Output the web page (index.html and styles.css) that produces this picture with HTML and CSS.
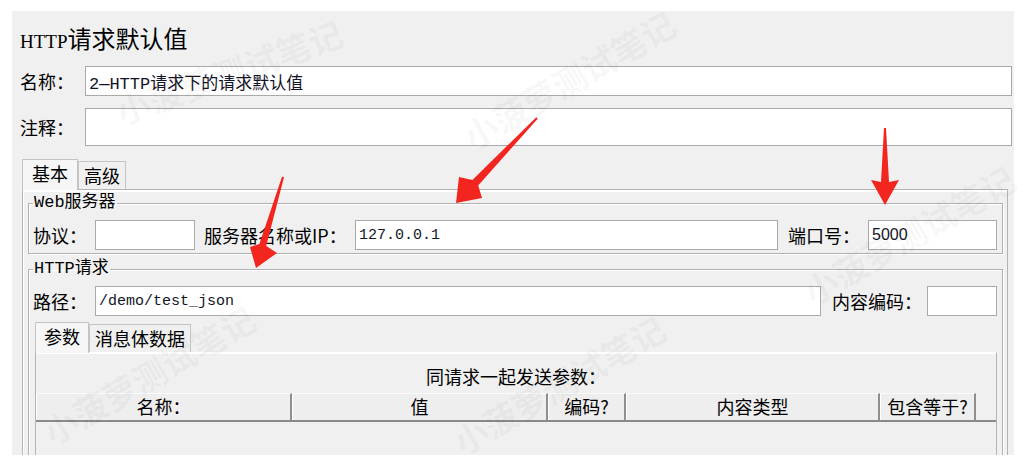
FILE: index.html
```html
<!DOCTYPE html>
<html lang="zh-CN">
<head>
    <meta charset="UTF-8">
    <meta name="viewport" content="width=device-width, initial-scale=1.0">
    <title>HTTP请求默认值</title>
    <link rel="stylesheet" href="styles.css">
</head>
<body>
    <div class="page">
        <div class="panel">
            <div class="title"><span class="latin">HTTP</span>请求默认值</div>

            <div class="row name-row">
                <label class="row-label">名称：</label>
                <input class="field name-field" type="text" value="2—HTTP请求下的请求默认值">
            </div>
            <div class="row comment-row">
                <label class="row-label">注释：</label>
                <input class="field comment-field" type="text" value="">
            </div>

            <div class="tabs">
                <div class="tab-heads">
                    <span class="tab active">基本</span>
                    <span class="tab">高级</span>
                </div>
                <div class="tab-body">
                    <fieldset class="group web-group">
                        <legend>Web服务器</legend>
                        <div class="group-row">
                            <label class="g-label proto-label">协议：</label>
                            <input class="field proto-field" type="text" value="">
                            <label class="g-label host-label">服务器名称或IP：</label>
                            <input class="field mono host-field" type="text" value="127.0.0.1">
                            <label class="g-label port-label">端口号：</label>
                            <input class="field port-field" type="text" value="5000">
                        </div>
                    </fieldset>

                    <fieldset class="group http-group">
                        <legend>HTTP请求</legend>
                        <div class="group-row">
                            <label class="g-label path-label">路径：</label>
                            <input class="field mono path-field" type="text" value="/demo/test_json">
                            <label class="g-label enc-label">内容编码：</label>
                            <input class="field enc-field" type="text" value="">
                        </div>

                        <div class="sub-heads">
                            <span class="sub-tab active">参数</span>
                            <span class="sub-tab">消息体数据</span>
                        </div>
                        <div class="sub-body">
                            <div class="params-title">同请求一起发送参数：</div>
                            <div class="table-head">
                                <div class="th col-name">名称：</div>
                                <div class="th col-value">值</div>
                                <div class="th col-enc">编码?</div>
                                <div class="th col-type">内容类型</div>
                                <div class="th col-eq">包含等于?</div>
                            </div>
                        </div>
                    </fieldset>
                </div>
            </div>
        </div>

        <!-- водяные знаки -->
        <div class="mark mark-1">小菠萝测试笔记</div>
        <div class="mark mark-2">小菠萝测试笔记</div>
        <div class="mark mark-3">小菠萝测试笔记</div>
        <div class="mark mark-4">小菠萝测试笔记</div>
        <div class="mark mark-5">小菠萝测试笔记</div>

        <!-- красные стрелки поверх формы -->
        <svg class="arrows" width="1024" height="471" viewBox="0 0 1024 471">
            <polygon points="536.3,117.3 472.4,179.9 459,177 456,203 482,198 478.2,185.5 537.7,118.7" />
            <polygon points="884,128 881,182 871,180 885,205 899,180 889,182 886,128" />
            <polygon points="282,176.7 259.4,244 250,247 256,268 277,253 266.2,246 284,177.3" />
        </svg>
    </div>
</body>
</html>
```

FILE: styles.css
```css
body {
    margin: 0;
    background-color: #fff;
    font-family: "Noto Sans CJK SC", sans-serif;
    color: #000;
}
.page {
    position: relative;
    width: 1024px;
    height: 471px;
    overflow: hidden;
}
.panel {
    margin: 11px 0 0 12px;
    width: 1002px;
    height: 444px;
    box-sizing: border-box;
    padding: 0 2px 0 8px;
    background-color: #f0f0f0;
    overflow: hidden;
}
.title {
    padding-top: 12px;
    font-size: 24px;
    line-height: 30px;
}
.title .latin {
    font-family: "Liberation Serif", serif;
    font-size: 19px;
}
.row {
    display: flex;
    align-items: center;
}
.name-row {
    margin-top: 9px;
    height: 30px;
}
.comment-row {
    margin-top: 12px;
    height: 38px;
}
.row-label {
    width: 65px;
    flex-shrink: 0;
    font-size: 18px;
}
.field {
    box-sizing: border-box;
    height: 30px;
    margin: 0;
    padding: 0 3px;
    border: 1px solid #a9a9a9;
    background-color: #fff;
    font-family: "Liberation Mono", "Noto Sans CJK SC", monospace;
    font-size: 16px;
    color: #141428;
    outline: none;
}
.name-field {
    flex: 1;
    font-size: 17px;
}
.comment-field {
    flex: 1;
    height: 38px;
}
.mono {
    font-size: 15px;
}

/* вкладки */
.tabs {
    margin: 13px 4px 0 2px;
}
.tab-heads,
.sub-heads {
    display: flex;
    align-items: flex-end;
}
.tab {
    box-sizing: border-box;
    height: 28px;
    padding: 0 5px;
    border: 1px solid #c4c4c4;
    border-bottom: none;
    font-size: 18px;
    line-height: 27px;
}
.tab.active {
    height: 31px;
    margin-bottom: -1px;
    padding: 0 9px;
    background-color: #f6f6f6;
    position: relative;
}
.tab-body {
    border: 1px solid #b4b4b4;
    box-shadow: inset 1px 2px 0 #fff;
    padding: 0 4px 0 5px;
}

/* группы */
.group {
    margin: 0;
    padding: 7px 5px 3px 4px;
    border: 1px solid #b1b1b1;
    box-shadow: inset 1px 1px 0 #fff, 1px 1px 0 #fff;
    min-width: 0;
}
.group legend {
    padding: 0 1px;
    font-family: "Liberation Mono", "Noto Sans CJK SC", monospace;
    font-size: 17px;
    line-height: 20px;
}
.web-group {
    margin-top: 3px;
}
.http-group {
    margin-top: 5px;
}
.group-row {
    display: flex;
    align-items: center;
    height: 30px;
}
.g-label {
    flex-shrink: 0;
    font-size: 18px;
    white-space: nowrap;
}
.proto-label { width: 62px; }
.proto-field { width: 100px; }
.host-label { width: 151px; margin-left: 9px; }
.host-field { flex: 1; min-width: 0; }
.port-label { width: 80px; margin-left: 10px; }
.port-field {
    width: 129px;
    font-family: "Liberation Sans", sans-serif;
}
.path-label { width: 62px; }
.path-field { flex: 1; min-width: 0; }
.enc-label { width: 95px; margin-left: 11px; }
.enc-field { width: 70px; }

.sub-heads {
    margin: 6px 0 0 2px;
}
.sub-tab {
    box-sizing: border-box;
    height: 28px;
    padding: 0 5px;
    border: 1px solid #c4c4c4;
    border-bottom: none;
    font-size: 18px;
    line-height: 27px;
}
.sub-tab.active {
    height: 31px;
    margin-bottom: -1px;
    padding: 0 8px;
    background-color: #f6f6f6;
    position: relative;
}
.sub-body {
    margin-left: 2px;
    height: 150px;
    border: 1px solid #b4b4b4;
    border-top-color: #fff;
    box-shadow: inset 0 1px 0 #fff;
}
.params-title {
    margin-top: 11px;
    text-align: center;
    font-size: 18px;
    line-height: 24px;
}
.table-head {
    display: flex;
    margin-top: 5px;
    height: 29px;
    box-sizing: border-box;
    border-bottom: 2px solid #8a8a8a;
}
.th {
    box-sizing: border-box;
    border-left: 1px solid #fff;
    border-top: 1px solid #fbfbfb;
    border-right: 2px solid #8f8f8f;
    background-color: #eeeeee;
    text-align: center;
    font-size: 18px;
    line-height: 25px;
}
.col-name { width: 256px; }
.col-value { width: 256px; }
.col-enc { width: 78px; }
.col-type { width: 254px; }
.col-eq { width: 96px; }

/* водяные знаки */
.mark {
    position: absolute;
    font-family: "Noto Sans CJK SC", sans-serif;
    font-weight: bold;
    font-size: 34px;
    line-height: 40px;
    white-space: nowrap;
    color: rgba(0, 0, 0, 0.045);
    transform: rotate(-30deg);
    pointer-events: none;
}
.mark-1 { left: 450px; top: 60px; }
.mark-2 { left: 110px; top: 52px; transform: rotate(-20deg); }
.mark-3 { left: 790px; top: 215px; }
.mark-4 { left: 30px; top: 355px; }
.mark-5 { left: 440px; top: 365px; }

.arrows {
    position: absolute;
    left: 0;
    top: 0;
    pointer-events: none;
}
.arrows polygon {
    fill: #f3261f;
}
```
